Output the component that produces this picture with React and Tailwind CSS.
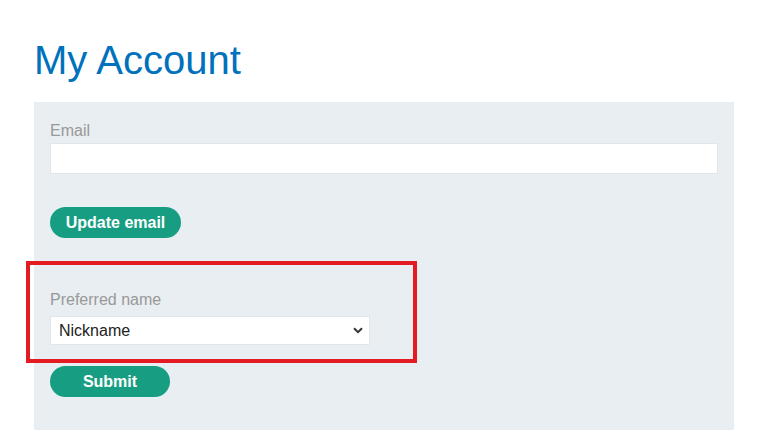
export default function App() {
  return (
    <div className="min-h-[443px] bg-white pt-[37px] pl-[34px] font-['Liberation_Sans',Arial,sans-serif]">
      <h1 className="text-[40px] leading-[46px] text-[#0071bc] font-normal">My Account</h1>
      <div className="mt-[19px] w-[700px] bg-[#e8eef1] px-4 pt-[20px] pb-[33px]">
        <label className="block text-[16px] leading-[18px] text-[#999999]">Email</label>
        <input
          type="text"
          className="mt-[3px] block h-[31px] w-[668px] border border-[#e3e6e8] bg-white outline-none"
        />
        <button className="mt-[33px] block h-[31px] w-[131px] rounded-full bg-[#179e82] text-[16px] font-bold text-white">
          Update email
        </button>
        <div className="relative mt-[53px]">
          <div className="pointer-events-none absolute -left-[24px] -top-[30px] h-[102px] w-[391px] border-4 border-[#e31b23]" />
          <label className="block text-[16px] leading-[18px] text-[#999999]">Preferred name</label>
          <div className="relative mt-[7px] h-[29px] w-[320px]">
            <select
              defaultValue="nick"
              className="h-[29px] w-[320px] appearance-none border border-[#e3e6e8] bg-white pl-[8px] text-[16px] text-[#222222] outline-none"
            >
              <option value="nick">Nickname</option>
              <option value="first">First name</option>
            </select>
            <svg
              className="pointer-events-none absolute right-[7px] top-[11px]"
              width="10"
              height="7"
              viewBox="0 0 10 7"
            >
              <path d="M1 1.2 L5 5.2 L9 1.2" fill="none" stroke="#333" strokeWidth="2" />
            </svg>
          </div>
        </div>
        <button className="mt-[21px] block h-[31px] w-[120px] rounded-full bg-[#179e82] text-[16px] font-bold text-white">
          Submit
        </button>
      </div>
    </div>
  );
}
